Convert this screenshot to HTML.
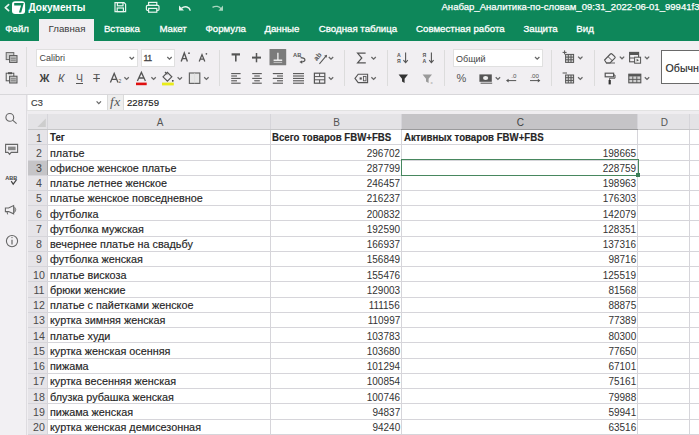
<!DOCTYPE html>
<html><head><meta charset="utf-8">
<style>
*{box-sizing:border-box;margin:0;padding:0}
html,body{width:699px;height:435px;overflow:hidden;background:#f1eff2;font-family:"Liberation Sans",sans-serif;position:relative}
.a{position:absolute}
#hdr{position:absolute;left:0;top:0;width:699px;height:41px;background:#0e875a}
.tt{position:absolute;color:#fff;font-size:10px;white-space:nowrap;line-height:12px}
.tab{position:absolute;top:23px;color:#fff;font-size:9.7px;line-height:12px;white-space:nowrap;-webkit-text-stroke:0.3px currentColor}
#acttab{position:absolute;left:38.6px;top:18.7px;width:55.2px;height:22.3px;background:#f1eff2}
#tb{position:absolute;left:0;top:41px;width:699px;height:54px;background:#f1eff2;border-bottom:1px solid #d8d7da}
.sep{position:absolute;width:1px;background:#dcdcdc}
.box{position:absolute;background:#fff;border:1px solid #e0e0e0}
.ic{position:absolute}
#side{position:absolute;left:0;top:93.5px;width:27.4px;height:342px;background:#f2f0f3;border-right:1px solid #dedce0}
#fbar{position:absolute;left:27.4px;top:93.5px;width:672px;height:20.2px;background:#efedf0;border-bottom:0}
#fbline{position:absolute;left:27.4px;top:110px;width:672px;height:1px;background:#e2e2e2}
/* grid */
#grid{position:absolute;left:0;top:0;width:699px;height:435px;overflow:hidden}
#sheetbg{position:absolute;left:28px;top:113.7px;width:671px;height:330px;background:#fff}
#corner{position:absolute;left:28px;top:114px;width:19.8px;height:15.4px;background:#e4e3e6}
.hdrline{position:absolute;left:28px;top:129px;width:671px;height:1px;background:#c6c6c8}
.chc{position:absolute;top:114px;height:15.4px;background:#e4e3e6;color:#555;font-size:10px;line-height:18.4px;text-align:center;padding-left:2px}
.chc.sel{background:#c5c4c7;color:#404040}
.rhc{position:absolute;left:28px;width:19.8px;height:15.23px;background:#e6e4e8;color:#4a4a4a;font-size:10.6px;line-height:16.1px;text-align:center;padding-left:2px}
.rhc.sel{background:#c5c4c7;color:#404040}
.hl{position:absolute;left:28px;width:671px;height:1px;background:#d6d5da}
.vl{position:absolute;top:113.7px;width:1px;height:330px;background:#d6d5da}
.ct{position:absolute;height:15.23px;line-height:16.5px;font-size:10.5px;color:#262626;white-space:nowrap;-webkit-text-stroke:0.15px #262626}
.ta{transform-origin:0 50%;transform:scaleX(1.03)}
.num{transform-origin:100% 50%;transform:scaleX(0.95);color:#333;-webkit-text-stroke:0}
.hb{font-weight:bold;font-size:11px;line-height:15.4px;transform-origin:0 50%;transform:scaleX(0.878)}
.selbox{position:absolute;border:1.7px solid #47875f}
.handle{position:absolute;width:4.2px;height:4.2px;background:#3b7d57}
#cornertri{position:absolute}
</style></head><body>
<div id="sheetbg"></div>
<div id="grid">
<div id="corner"></div>
<div class="chc" style="left:47.80px;width:222.50px">A</div>
<div class="chc" style="left:270.30px;width:130.70px">B</div>
<div class="chc sel" style="left:401.00px;width:236.60px">C</div>
<div class="chc" style="left:637.60px;width:51.60px">D</div>
<div class="chc" style="left:689.20px;width:70.80px">E</div>
<div class="rhc" style="top:129.55px">1</div>
<div class="rhc" style="top:144.79px">2</div>
<div class="rhc sel" style="top:160.02px">3</div>
<div class="rhc" style="top:175.25px">4</div>
<div class="rhc" style="top:190.49px">5</div>
<div class="rhc" style="top:205.73px">6</div>
<div class="rhc" style="top:220.96px">7</div>
<div class="rhc" style="top:236.19px">8</div>
<div class="rhc" style="top:251.43px">9</div>
<div class="rhc" style="top:266.67px">10</div>
<div class="rhc" style="top:281.90px">11</div>
<div class="rhc" style="top:297.13px">12</div>
<div class="rhc" style="top:312.37px">13</div>
<div class="rhc" style="top:327.61px">14</div>
<div class="rhc" style="top:342.84px">15</div>
<div class="rhc" style="top:358.07px">16</div>
<div class="rhc" style="top:373.31px">17</div>
<div class="rhc" style="top:388.55px">18</div>
<div class="rhc" style="top:403.78px">19</div>
<div class="rhc" style="top:419.01px">20</div>
<div class="rhc" style="top:434.25px">21</div>
<div class="hl" style="top:129.05px"></div>
<div class="hl" style="top:144.29px"></div>
<div class="hl" style="top:159.52px"></div>
<div class="hl" style="top:174.75px"></div>
<div class="hl" style="top:189.99px"></div>
<div class="hl" style="top:205.23px"></div>
<div class="hl" style="top:220.46px"></div>
<div class="hl" style="top:235.69px"></div>
<div class="hl" style="top:250.93px"></div>
<div class="hl" style="top:266.17px"></div>
<div class="hl" style="top:281.40px"></div>
<div class="hl" style="top:296.63px"></div>
<div class="hl" style="top:311.87px"></div>
<div class="hl" style="top:327.11px"></div>
<div class="hl" style="top:342.34px"></div>
<div class="hl" style="top:357.57px"></div>
<div class="hl" style="top:372.81px"></div>
<div class="hl" style="top:388.05px"></div>
<div class="hl" style="top:403.28px"></div>
<div class="hl" style="top:418.51px"></div>
<div class="hl" style="top:433.75px"></div>
<div class="hl" style="top:448.99px"></div>
<div class="vl" style="left:47.30px"></div>
<div class="vl" style="left:269.80px"></div>
<div class="vl" style="left:400.50px"></div>
<div class="vl" style="left:637.10px"></div>
<div class="vl" style="left:688.70px"></div>
<div class="hdrline"></div>
<div class="a" style="left:401px;top:129px;width:236.6px;height:1px;background:#9a9a9c"></div>
<div class="a" style="left:47px;top:160px;width:1px;height:15px;background:#a2a2a4"></div>
<div class="ct hb" style="top:129.55px;left:50.0px">Тег</div>
<div class="ct hb" style="top:129.55px;left:271.9px">Всего товаров FBW+FBS</div>
<div class="ct hb" style="top:129.55px;left:404.3px">Активных товаров FBW+FBS</div>
<div class="ct ta" style="top:144.79px;left:50.0px">платье</div>
<div class="ct num" style="top:144.79px;right:299.0px">296702</div>
<div class="ct num" style="top:144.79px;right:63.0px">198665</div>
<div class="ct ta" style="top:160.02px;left:50.0px">офисное женское платье</div>
<div class="ct num" style="top:160.02px;right:299.0px">287799</div>
<div class="ct num" style="top:160.02px;right:63.0px">228759</div>
<div class="ct ta" style="top:175.25px;left:50.0px">платье летнее женское</div>
<div class="ct num" style="top:175.25px;right:299.0px">246457</div>
<div class="ct num" style="top:175.25px;right:63.0px">198963</div>
<div class="ct ta" style="top:190.49px;left:50.0px">платье женское повседневное</div>
<div class="ct num" style="top:190.49px;right:299.0px">216237</div>
<div class="ct num" style="top:190.49px;right:63.0px">176303</div>
<div class="ct ta" style="top:205.73px;left:50.0px">футболка</div>
<div class="ct num" style="top:205.73px;right:299.0px">200832</div>
<div class="ct num" style="top:205.73px;right:63.0px">142079</div>
<div class="ct ta" style="top:220.96px;left:50.0px">футболка мужская</div>
<div class="ct num" style="top:220.96px;right:299.0px">192590</div>
<div class="ct num" style="top:220.96px;right:63.0px">128351</div>
<div class="ct ta" style="top:236.19px;left:50.0px">вечернее платье на свадьбу</div>
<div class="ct num" style="top:236.19px;right:299.0px">166937</div>
<div class="ct num" style="top:236.19px;right:63.0px">137316</div>
<div class="ct ta" style="top:251.43px;left:50.0px">футболка женская</div>
<div class="ct num" style="top:251.43px;right:299.0px">156849</div>
<div class="ct num" style="top:251.43px;right:63.0px">98716</div>
<div class="ct ta" style="top:266.67px;left:50.0px">платье вискоза</div>
<div class="ct num" style="top:266.67px;right:299.0px">155476</div>
<div class="ct num" style="top:266.67px;right:63.0px">125519</div>
<div class="ct ta" style="top:281.90px;left:50.0px">брюки женские</div>
<div class="ct num" style="top:281.90px;right:299.0px">129003</div>
<div class="ct num" style="top:281.90px;right:63.0px">81568</div>
<div class="ct ta" style="top:297.13px;left:50.0px">платье с пайетками женское</div>
<div class="ct num" style="top:297.13px;right:299.0px">111156</div>
<div class="ct num" style="top:297.13px;right:63.0px">88875</div>
<div class="ct ta" style="top:312.37px;left:50.0px">куртка зимняя женская</div>
<div class="ct num" style="top:312.37px;right:299.0px">110997</div>
<div class="ct num" style="top:312.37px;right:63.0px">77389</div>
<div class="ct ta" style="top:327.61px;left:50.0px">платье худи</div>
<div class="ct num" style="top:327.61px;right:299.0px">103783</div>
<div class="ct num" style="top:327.61px;right:63.0px">80300</div>
<div class="ct ta" style="top:342.84px;left:50.0px">куртка женская осенняя</div>
<div class="ct num" style="top:342.84px;right:299.0px">103680</div>
<div class="ct num" style="top:342.84px;right:63.0px">77650</div>
<div class="ct ta" style="top:358.07px;left:50.0px">пижама</div>
<div class="ct num" style="top:358.07px;right:299.0px">101294</div>
<div class="ct num" style="top:358.07px;right:63.0px">67101</div>
<div class="ct ta" style="top:373.31px;left:50.0px">куртка весенняя женская</div>
<div class="ct num" style="top:373.31px;right:299.0px">100854</div>
<div class="ct num" style="top:373.31px;right:63.0px">75161</div>
<div class="ct ta" style="top:388.55px;left:50.0px">блузка рубашка женская</div>
<div class="ct num" style="top:388.55px;right:299.0px">100746</div>
<div class="ct num" style="top:388.55px;right:63.0px">79988</div>
<div class="ct ta" style="top:403.78px;left:50.0px">пижама женская</div>
<div class="ct num" style="top:403.78px;right:299.0px">94837</div>
<div class="ct num" style="top:403.78px;right:63.0px">59941</div>
<div class="ct ta" style="top:419.01px;left:50.0px">куртка женская демисезонная</div>
<div class="ct num" style="top:419.01px;right:299.0px">94240</div>
<div class="ct num" style="top:419.01px;right:63.0px">63516</div>
<div class="selbox" style="left:400.8px;top:159.3px;width:238.1px;height:17.2px"></div>
<div class="handle" style="left:635.8px;top:173.2px"></div>
</div>
<div id="side"></div>
<div id="fbar"></div>
<div id="fbline"></div>
<div id="tb"></div>
<div id="hdr"></div>
<div id="acttab"></div>
<!-- title row -->
<div class="tt" style="left:28.5px;top:1.8px;font-weight:bold;font-size:10.1px">Документы</div>
<div class="tt" style="left:441.5px;top:0.9px;font-size:9.55px;-webkit-text-stroke:0.25px #fff">Анабар_Аналитика-по-словам_09:31_2022-06-01_99941f3a</div>
<!-- tabs -->
<div class="tab" style="left:5.2px">Файл</div>
<div class="tab" style="left:48.6px;color:#3a3a3a;-webkit-text-stroke:0">Главная</div>
<div class="tab" style="left:103.9px">Вставка</div>
<div class="tab" style="left:159.4px">Макет</div>
<div class="tab" style="left:205.4px">Формула</div>
<div class="tab" style="left:264.4px">Данные</div>
<div class="tab" style="left:318.8px">Сводная таблица</div>
<div class="tab" style="left:416px">Совместная работа</div>
<div class="tab" style="left:523.4px">Защита</div>
<div class="tab" style="left:576.3px">Вид</div>
<!-- toolbar boxes -->
<div class="sep" style="left:26.4px;top:47px;height:40px"></div>
<div class="box" style="left:36.2px;top:49.2px;width:101.4px;height:17.4px"></div>
<div class="box" style="left:140.6px;top:49.2px;width:34.6px;height:17.4px"></div>
<div class="sep" style="left:219.4px;top:49.5px;height:36px"></div>
<div class="sep" style="left:344.4px;top:49.5px;height:36px"></div>
<div class="sep" style="left:386.5px;top:49.5px;height:36px"></div>
<div class="sep" style="left:444px;top:49.5px;height:36px"></div>
<div class="box" style="left:453px;top:49.4px;width:90px;height:17.2px"></div>
<div class="sep" style="left:551.4px;top:49.5px;height:36px"></div>
<div class="sep" style="left:593.7px;top:49.5px;height:36px"></div>
<div class="box" style="left:660.6px;top:50px;width:60px;height:34.4px;border:1.4px solid #6a6a6a"></div>
<!-- formula bar -->
<div class="box" style="left:28px;top:94.7px;width:78.5px;height:15.7px;border:none"></div>
<div class="a" style="left:106.5px;top:94.7px;width:17.8px;height:15.7px;background:#eeeeee;border-left:1px solid #dadada;border-right:1px solid #dadada"></div>
<div class="box" style="left:124.3px;top:94.7px;width:580px;height:15.7px;border:none"></div>
<svg class="a" style="left:0;top:0" width="699" height="435" viewBox="0 0 699 435">
<!-- title bar -->
<polyline points="8.6,4.6 5.3,7.6 8.6,10.6" fill="none" stroke="#fff" stroke-width="1.7" stroke-linecap="round" stroke-linejoin="round" opacity="0.9"/>
<rect x="12" y="1.3" width="13.1" height="12.6" rx="3.2" fill="#fff"/>
<path d="M14.2,3 L23.8,3 L21.2,12.4 L18.9,12.4 L21.1,5.5 L14.2,5.5 Z" fill="#0e875a"/>
<!-- save -->
<g fill="none" stroke="#e8f5ee" stroke-width="1.2">
<path d="M115,2.6 H124 L125.6,4.2 V11.6 H115 Z"/>
<rect x="117.4" y="2.6" width="5.6" height="3.2"/>
<rect x="117.2" y="8" width="6.2" height="3.6"/>
</g>
<!-- print -->
<g fill="none" stroke="#e8f5ee" stroke-width="1.2">
<rect x="148.6" y="2.4" width="8.2" height="3"/>
<rect x="146.4" y="5.4" width="12.6" height="5" rx="1.2"/>
<rect x="148.6" y="8.4" width="8.2" height="3.8" fill="#0e875a"/>
</g>
<!-- undo -->
<path d="M190.3,10.6 C189.5,7 185,5.6 181.6,8.2" fill="none" stroke="#e8f5ee" stroke-width="1.5"/>
<path d="M179,5.4 L179,10.6 L184,10.6 Z" fill="#e8f5ee"/>
<!-- redo -->
<path d="M212.5,7.4 C215.5,5.4 219.5,6.2 221.2,9" fill="none" stroke="#a9d6bf" stroke-width="1.3"/>
<path d="M223,5.6 L223,10.8 L218.4,10.8 Z" fill="#a9d6bf"/>

<!-- toolbar -->
<g fill="none" stroke="#555" stroke-width="1">
<!-- copy -->
<rect x="6.2" y="52.6" width="7.6" height="7" fill="#d0d0d0" stroke="#666"/>
<rect x="9.6" y="55.6" width="7.4" height="6.8" fill="#c4c4c4" stroke="#555"/>
<line x1="10.8" y1="58.2" x2="15.8" y2="58.2" stroke="#666" stroke-width="0.8"/>
<line x1="10.8" y1="60.2" x2="15.8" y2="60.2" stroke="#666" stroke-width="0.8"/>
<!-- paste -->
<rect x="6.2" y="73.2" width="7.6" height="7.6" fill="#eee" stroke="#555"/>
<rect x="8" y="72.2" width="4" height="2" fill="#555" stroke="none"/>
<rect x="9.6" y="76.2" width="7.4" height="6.8" fill="#c4c4c4" stroke="#555"/>
<line x1="10.8" y1="78.8" x2="15.8" y2="78.8" stroke="#666" stroke-width="0.8"/>
<line x1="10.8" y1="80.8" x2="15.8" y2="80.8" stroke="#666" stroke-width="0.8"/>
</g>
<!-- chevrons -->
<g fill="none" stroke="#666" stroke-width="1.25">
<polyline points="129.6,57 131.8,59.2 134,57"/>
<polyline points="96.6,101.4 98.8,103.6 101,101.4"/>
<polyline points="167.3,57 169.5,59.2 171.7,57"/>
<polyline points="124.4,77.2 126.6,79.4 128.8,77.2"/>
<polyline points="151.4,77.2 153.6,79.4 155.8,77.2"/>
<polyline points="177.6,77.2 179.8,79.4 182,77.2"/>
<polyline points="204.2,77.2 206.4,79.4 208.6,77.2"/>
<polyline points="328.8,57 331,59.2 333.2,57"/>
<polyline points="328.8,77.2 331,79.4 333.2,77.2"/>
<polyline points="371.4,57 373.6,59.2 375.8,57"/>
<polyline points="371.4,77.2 373.6,79.4 375.8,77.2"/>
<polyline points="535,57 537.2,59.2 539.4,57"/>
<polyline points="495.7,77.2 497.9,79.4 500.1,77.2"/>
<polyline points="578.1,56.6 580.3,58.8 582.5,56.6"/>
<polyline points="578.1,77.2 580.3,79.4 582.5,77.2"/>
<polyline points="619.8,56.6 622,58.8 624.2,56.6"/>
<polyline points="644.8,56.6 647,58.8 649.2,56.6"/>
<polyline points="644.8,77.2 647,79.4 649.2,77.2"/>
</g>
<!-- A increase/decrease -->
<path d="M181.2,61.4 L184.3,53 L187.4,61.4 M182.3,58.6 H186.3" fill="none" stroke="#555" stroke-width="1.4"/>
<circle cx="189" cy="53.2" r="0.9" fill="#555"/>
<path d="M199.2,61.4 L202,54.6 L204.8,61.4 M200.1,59.2 H203.9" fill="none" stroke="#555" stroke-width="1.3"/>
<circle cx="206.4" cy="53.8" r="0.85" fill="#555"/>
<!-- A subscript -->
<path d="M110.4,82.6 L114.2,73.4 L118,82.6 M111.8,79.4 H116.6" fill="none" stroke="#555" stroke-width="1.3"/>
<text x="118.4" y="83" font-size="5" fill="#555" font-family="Liberation Sans">2</text>
<!-- font color -->
<path d="M137.4,81 L141.4,72.4 L145.4,81 M138.8,78 H144" fill="none" stroke="#555" stroke-width="1.3"/>
<rect x="136" y="82.6" width="10.7" height="2.6" fill="#e01010"/>
<!-- fill bucket -->
<path d="M163,76.8 L167.4,72.4 L171.8,76.8 L167.4,81.2 Z" fill="none" stroke="#555" stroke-width="1.2"/>
<path d="M165,72 L167.4,74.4" stroke="#555" stroke-width="1.2"/>
<circle cx="172.8" cy="80.8" r="0.9" fill="#333"/>
<rect x="162" y="82.6" width="11.8" height="2.8" fill="#e9ec1a"/>
<!-- borders -->
<rect x="189.4" y="73" width="10.4" height="10.4" fill="#e6e6e6" stroke="#666" stroke-width="1.2"/>
<line x1="194.6" y1="73" x2="194.6" y2="83.4" stroke="#d8d8d8" stroke-width="0.6"/>
<!-- align top -->
<g stroke="#555" fill="none">
<line x1="231.6" y1="54.4" x2="240" y2="54.4" stroke-width="2.2"/>
<line x1="235.8" y1="54.4" x2="235.8" y2="61.4" stroke-width="1.6"/>
<!-- align middle -->
<line x1="252" y1="57.6" x2="261" y2="57.6" stroke-width="2"/>
<line x1="256.5" y1="53" x2="256.5" y2="62.3" stroke-width="1.5"/>
</g>
<!-- align bottom active -->
<rect x="269.5" y="49" width="16.7" height="16.2" fill="#7b7b7b" rx="0.5"/>
<g stroke="#fff" fill="none">
<line x1="273.6" y1="60.2" x2="282.2" y2="60.2" stroke-width="1.3"/>
<line x1="277.9" y1="52.8" x2="277.9" y2="60" stroke-width="1.2"/>
<line x1="273.6" y1="62.4" x2="282.2" y2="62.4" stroke-width="0.8" opacity="0.7"/>
</g>
<!-- wrap AB -->
<text x="293" y="57.2" font-size="5.8" font-weight="bold" fill="#555" font-family="Liberation Sans">AB</text>
<path d="M300.6,57.6 C306.2,57.6 306.2,62 301.4,62" fill="none" stroke="#555" stroke-width="1.2"/>
<path d="M299.4,62 L302.2,60.2 L302.2,63.8 Z" fill="#555"/>
<!-- orientation -->
<g transform="rotate(-50 319.5 56.5)">
<text x="314.2" y="57.4" font-size="7" font-weight="bold" fill="#555" font-family="Liberation Sans">ab</text>
<line x1="313.8" y1="61.2" x2="324.6" y2="61.2" stroke="#555" stroke-width="1"/>
<path d="M325.6,61.2 L323,59.6 L323,62.8 Z" fill="#555"/>
</g>
<!-- align row2 -->
<g stroke="#555" stroke-width="1.1">
<line x1="231.2" y1="73.6" x2="240.6" y2="73.6"/><line x1="231.2" y1="76" x2="237" y2="76"/><line x1="231.2" y1="78.4" x2="240.6" y2="78.4"/><line x1="231.2" y1="80.8" x2="237" y2="80.8"/><line x1="231.2" y1="83.2" x2="240.6" y2="83.2"/>
<line x1="252.2" y1="73.6" x2="261.8" y2="73.6"/><line x1="254.2" y1="76" x2="259.8" y2="76"/><line x1="252.2" y1="78.4" x2="261.8" y2="78.4"/><line x1="254.2" y1="80.8" x2="259.8" y2="80.8"/><line x1="252.2" y1="83.2" x2="261.8" y2="83.2"/>
<line x1="272.8" y1="73.6" x2="283" y2="73.6"/><line x1="277" y1="76" x2="283" y2="76"/><line x1="272.8" y1="78.4" x2="283" y2="78.4"/><line x1="277" y1="80.8" x2="283" y2="80.8"/><line x1="272.8" y1="83.2" x2="283" y2="83.2"/>
<line x1="293" y1="73.6" x2="304" y2="73.6"/><line x1="293" y1="76" x2="304" y2="76"/><line x1="293" y1="78.4" x2="304" y2="78.4"/><line x1="293" y1="80.8" x2="304" y2="80.8"/><line x1="293" y1="83.2" x2="304" y2="83.2"/>
</g>
<!-- merge -->
<rect x="314.4" y="73.2" width="10.4" height="10" fill="none" stroke="#555" stroke-width="1.2"/>
<line x1="314.4" y1="76.6" x2="324.8" y2="76.6" stroke="#555" stroke-width="1"/>
<line x1="314.4" y1="79.8" x2="324.8" y2="79.8" stroke="#555" stroke-width="1"/>
<line x1="319.6" y1="73.2" x2="319.6" y2="76.6" stroke="#555" stroke-width="1"/>
<line x1="319.6" y1="79.8" x2="319.6" y2="83.2" stroke="#555" stroke-width="1"/>
<!-- sigma -->
<path d="M365.6,53.2 H357.6 L361.8,58 L357.6,62.8 H365.8" fill="none" stroke="#555" stroke-width="1.2"/>
<!-- named range -->
<path d="M355,78.4 L358.2,74.2 H367.6 V82.6 H358.2 Z" fill="none" stroke="#555" stroke-width="1.1"/>
<rect x="359.6" y="77.4" width="2.2" height="2.2" fill="#555"/>
<rect x="363.4" y="76.4" width="2.6" height="4.4" fill="none" stroke="#555" stroke-width="0.9"/>
<!-- sort -->
<g font-family="Liberation Sans" font-size="5.2" font-weight="bold" fill="#555">
<text x="397" y="56.6">A</text><text x="397" y="62.6">Я</text>
<text x="422.4" y="56.6">Я</text><text x="422.4" y="62.6">A</text>
</g>
<g stroke="#555" stroke-width="1.1" fill="none">
<line x1="405.6" y1="52.6" x2="405.6" y2="62.4"/><polyline points="403.4,60.2 405.6,62.6 407.8,60.2"/>
<line x1="431.4" y1="52.6" x2="431.4" y2="62.4"/><polyline points="429.2,60.2 431.4,62.6 433.6,60.2"/>
</g>
<!-- filter -->
<path d="M398.6,74.6 H408 L404.6,78.8 V83 L402,81.4 V78.8 Z" fill="#333"/>
<path d="M422.6,74.6 H432 L428.6,78.8 V83 L426,81.4 V78.8 Z" fill="#9a9a9a"/>
<text x="430.6" y="84.2" font-size="4.4" fill="#9a9a9a" font-family="Liberation Sans">x</text>
<!-- % -->
<text x="456.4" y="82.4" font-size="11" fill="#555" font-family="Liberation Sans">%</text>
<!-- currency -->
<rect x="479.4" y="74.4" width="12.4" height="7.4" fill="#555"/>
<ellipse cx="485.6" cy="78.1" rx="2.6" ry="2" fill="#eee"/>
<line x1="480.6" y1="83.2" x2="492.2" y2="83.2" stroke="#555" stroke-width="1"/>
<!-- decimals -->
<text x="511.2" y="78" font-size="6.2" fill="#555" font-family="Liberation Sans">.0</text>
<line x1="507" y1="80.6" x2="516.2" y2="80.6" stroke="#555" stroke-width="1"/>
<path d="M506,80.6 L508.6,78.8 L508.6,82.4 Z" fill="#555"/>
<text x="530.4" y="78" font-size="6.2" fill="#555" font-family="Liberation Sans">.00</text>
<line x1="530" y1="80.6" x2="539.4" y2="80.6" stroke="#555" stroke-width="1"/>
<path d="M540.4,80.6 L537.8,78.8 L537.8,82.4 Z" fill="#555"/>
<!-- insert / delete cells -->
<g stroke="#555" fill="none" stroke-width="1">
<rect x="565.6" y="54.4" width="8" height="8" fill="#d8d8d8"/>
<line x1="565.6" y1="57.1" x2="573.6" y2="57.1"/><line x1="565.6" y1="59.8" x2="573.6" y2="59.8"/>
<line x1="568.3" y1="54.4" x2="568.3" y2="62.4"/><line x1="571" y1="54.4" x2="571" y2="62.4"/>
<line x1="562.6" y1="52.4" x2="566.6" y2="52.4"/><line x1="564.6" y1="50.4" x2="564.6" y2="54.4"/>
<rect x="565.6" y="75" width="8" height="8" fill="#d8d8d8"/>
<line x1="565.6" y1="77.7" x2="573.6" y2="77.7"/><line x1="565.6" y1="80.4" x2="573.6" y2="80.4"/>
<line x1="568.3" y1="75" x2="568.3" y2="83"/><line x1="571" y1="75" x2="571" y2="83"/>
<line x1="562.6" y1="73" x2="567" y2="73"/>
</g>
<!-- eraser -->
<path d="M604.6,60 L610.4,54 Q611.2,53.2 612,54 L614.8,56.6 Q615.6,57.4 614.8,58.2 L610,63 H606.4 Z" fill="none" stroke="#555" stroke-width="1.1"/>
<line x1="608" y1="56.6" x2="612.2" y2="60.6" stroke="#555" stroke-width="1"/>
<line x1="606" y1="63" x2="615" y2="63" stroke="#555" stroke-width="0.9"/>
<!-- conditional formatting -->
<rect x="629.6" y="52.4" width="9" height="9.4" fill="none" stroke="#555" stroke-width="1.1"/>
<rect x="629.6" y="52.4" width="9" height="2.6" fill="#555"/>
<line x1="629.6" y1="58" x2="634" y2="58" stroke="#555"/>
<rect x="634.6" y="57.2" width="6" height="6" fill="#eee" stroke="#555" stroke-width="1"/>
<path d="M636.6,58.8 L639,60.2 L636.6,61.6 Z" fill="#555"/>
<!-- format painter -->
<rect x="605.2" y="73.2" width="8.4" height="3.6" fill="none" stroke="#555" stroke-width="1.2"/>
<path d="M613.6,75 H615 V78.2 H609.6 V80" fill="none" stroke="#555" stroke-width="1"/>
<rect x="608.6" y="80" width="2.2" height="4.4" fill="#333"/>
<!-- table -->
<rect x="628.8" y="74.2" width="12" height="8.6" fill="#d0d0d0" stroke="#555" stroke-width="1.1"/>
<rect x="628.8" y="74.2" width="12" height="2.2" fill="#555"/>
<g stroke="#555" stroke-width="0.9"><line x1="628.8" y1="79.4" x2="640.8" y2="79.4"/><line x1="632.8" y1="76.4" x2="632.8" y2="82.8"/><line x1="636.8" y1="76.4" x2="636.8" y2="82.8"/></g>

<!-- sidebar icons -->
<g stroke="#666" fill="none" stroke-width="1.1">
<circle cx="9.8" cy="117.4" r="3.9"/>
<line x1="12.6" y1="120.2" x2="16.6" y2="123.6"/>
<path d="M5.6,144.4 H17.6 V152.4 H11.2 L9.6,154.4 L8,152.4 H5.6 Z"/>
<path d="M5.4,208 H8.6 L13.6,205.6 V213.8 L8.6,211.6 H5.4 Z"/>
<circle cx="12" cy="241.1" r="5.6"/>
<line x1="12" y1="239.8" x2="12" y2="244.4" stroke-width="1.2"/>
</g>
<rect x="8" y="146.6" width="7.6" height="3.6" fill="#888"/>
<path d="M13.8,206.4 Q17.8,209.7 13.8,213" fill="#999" stroke="#777" stroke-width="0.8"/>
<line x1="7" y1="211.6" x2="7.6" y2="214.4" stroke="#666" stroke-width="1"/>
<circle cx="12" cy="237.6" r="0.7" fill="#666"/>
<text x="5.2" y="180.2" font-size="5.4" font-weight="bold" fill="#444" font-family="Liberation Sans" textLength="12" lengthAdjust="spacingAndGlyphs">ABB</text>
<path d="M11.2,181.2 L13.2,184.2 L16.4,179.8" fill="none" stroke="#444" stroke-width="1.2"/>
<!-- corner triangle -->
<path d="M45.8,118.6 L45.8,127 L37.4,127 Z" fill="#cdcdcd"/>
</svg>

<div class="tt" style="left:39.6px;top:52px;color:#444;font-size:9px">Calibri</div>
<div class="tt" style="left:143.6px;top:52.4px;color:#444;font-size:8.8px;letter-spacing:-0.7px;-webkit-text-stroke:0.3px #444">11</div>
<div class="tt" style="left:456px;top:52.8px;color:#444;font-size:9px">Общий</div>
<div class="tt" style="left:665.6px;top:62.2px;color:#2a2a2a;font-size:10.6px;-webkit-text-stroke:0.15px #2a2a2a">Обычный</div>
<div class="tt" style="left:39.4px;top:72.4px;color:#444;font-size:11px;font-weight:bold">Ж</div>
<div class="tt" style="left:58px;top:72.4px;color:#555;font-size:11px;font-style:italic">К</div>
<div class="tt" style="left:76px;top:72.2px;color:#555;font-size:10.5px;text-decoration:underline">Ч</div>
<div class="tt" style="left:93.2px;top:72.4px;color:#555;font-size:11px;text-decoration:line-through">Т</div>
<div class="tt" style="left:31px;top:96.8px;color:#444;font-size:9.2px;-webkit-text-stroke:0.2px #444">C3</div>
<div class="tt" style="left:127px;top:97.2px;color:#222;font-size:9.6px;-webkit-text-stroke:0.15px #222">228759</div>
<div class="tt" style="left:110px;top:95.2px;color:#555;font-size:13.5px;line-height:13px;letter-spacing:0.6px;font-family:'Liberation Serif';font-style:italic">fx</div>
</body></html>
